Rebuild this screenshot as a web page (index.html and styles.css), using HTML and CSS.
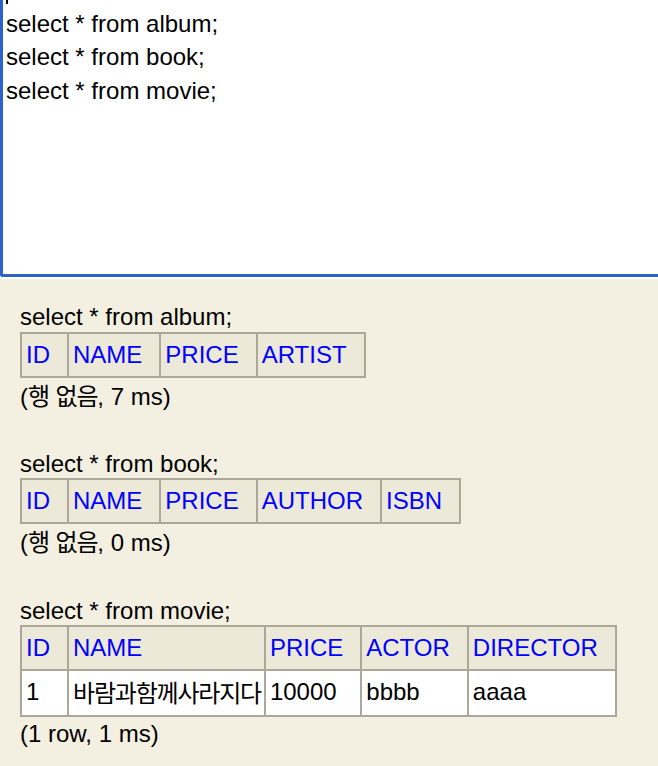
FILE: index.html
```html
<!DOCTYPE html>
<html lang="ko">
<head>
<meta charset="utf-8">
<title>H2 Console</title>
<link rel="stylesheet" href="styles.css">
</head>
<body>
<div class="editor-wrap">
  <div class="editor">
    <div class="code">
      <div class="line"><span class="caret"></span></div>
      <div class="line">select * from album;</div>
      <div class="line">select * from book;</div>
      <div class="line">select * from movie;</div>
    </div>
  </div>
</div>
<div class="results">
  <div class="query">select * from album;</div>
  <table class="result">
    <tr><th>ID</th><th>NAME</th><th>PRICE</th><th>ARTIST</th></tr>
  </table>
  <div class="status">(<span class="ko">행</span> <span class="ko">없음</span>, 7 ms)</div>
  <div class="blank"></div>

  <div class="query">select * from book;</div>
  <table class="result">
    <tr><th>ID</th><th>NAME</th><th>PRICE</th><th>AUTHOR</th><th>ISBN</th></tr>
  </table>
  <div class="status">(<span class="ko">행</span> <span class="ko">없음</span>, 0 ms)</div>
  <div class="blank"></div>

  <div class="query">select * from movie;</div>
  <table class="result">
    <tr><th>ID</th><th>NAME</th><th>PRICE</th><th>ACTOR</th><th>DIRECTOR</th></tr>
    <tr><td>1</td><td><span class="ko">바람과함께사라지다</span></td><td>10000</td><td>bbbb</td><td>aaaa</td></tr>
  </table>
  <div class="status">(1 row, 1 ms)</div>
</div>
</body>
</html>
```

FILE: styles.css
```css
html, body {
  margin: 0;
  padding: 0;
}
body {
  background: #f3efe1;
  font-family: "Liberation Sans", Arial, "Noto Sans CJK KR", sans-serif;
  font-size: 24px;
  line-height: 33.6px;
  color: #000;
  overflow: hidden;
}
.editor-wrap {
  background: #ffffff;
  padding-bottom: 2px;
  overflow: hidden;
}
.editor {
  width: calc(100% + 20px);
  height: 274px;
  border-left: 3px solid #2c62cd;
  border-bottom: 3px solid #2c62cd;
  border-bottom-left-radius: 3px;
  padding-left: 3px;
  overflow: hidden;
  background: #ffffff;
}
.code {
  margin-top: -27px;
}
.line {
  height: 33.6px;
  white-space: pre;
}
.caret {
  display: inline-block;
  width: 1.5px;
  height: 27px;
  background: #000;
  vertical-align: -6px;
}
.results {
  padding: 21px 20px 0 20px;
}
.query {
  height: 31.6px;
}
.ko {
  font-family: "Noto Sans CJK KR", sans-serif;
  letter-spacing: -1.2px;
}
.result {
  border-collapse: collapse;
  border: 2px solid #aca899;
  background: #ffffff;
}
.result th {
  background: #ece9d8;
  color: #0000ff;
  font-weight: normal;
  text-align: left;
  border: 2px solid #aca899;
  padding: 5px 17px 5px 4px;
  line-height: 32px;
}
.result td {
  background: #ffffff;
  text-align: left;
  vertical-align: top;
  border: 2px solid #aca899;
  padding: 5px 3px 5px 4px;
  line-height: 32px;
}
.blank {
  height: 33.6px;
}
```
